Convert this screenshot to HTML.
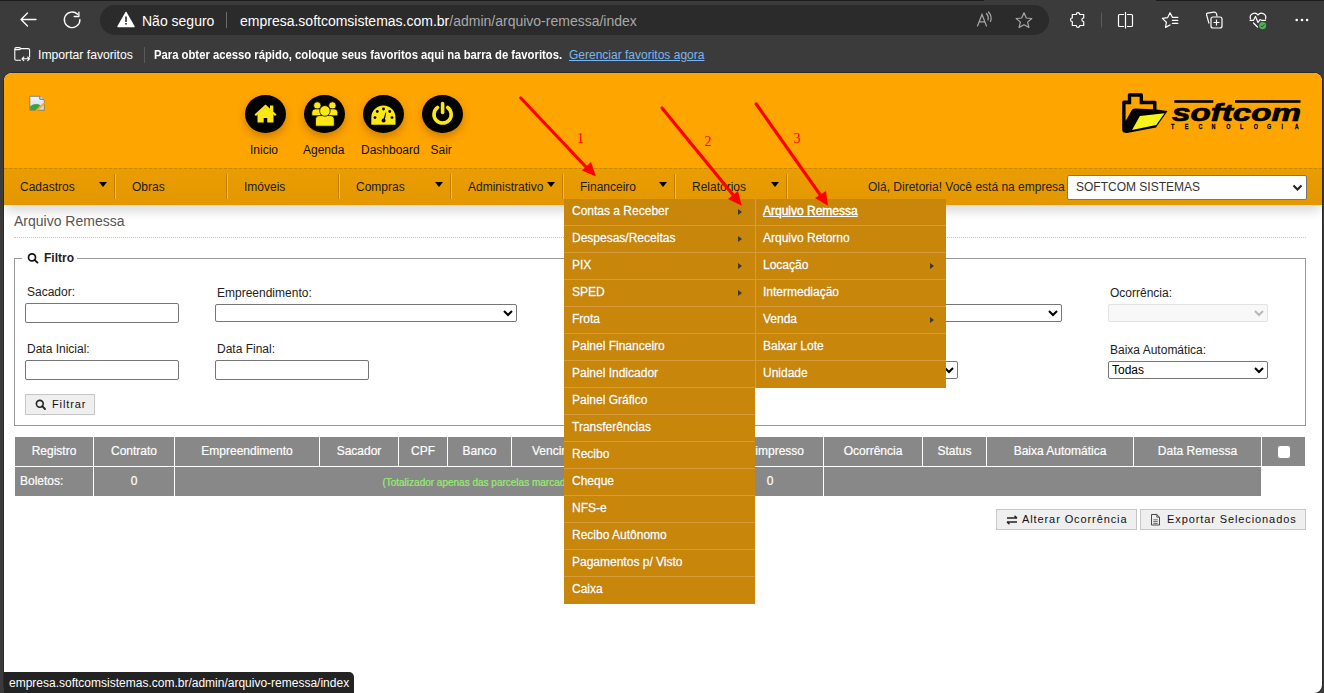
<!DOCTYPE html>
<html><head><meta charset="utf-8">
<style>
*{margin:0;padding:0;box-sizing:border-box}
html,body{width:1324px;height:693px;overflow:hidden;background:#3b3b3b;font-family:"Liberation Sans",sans-serif;font-size:12px;position:relative}
.a{position:absolute}
.t{position:absolute;white-space:nowrap;line-height:1}
#topstrip{left:0;top:0;width:1324px;height:1px;background:#1c1c1c}
#addr{left:100px;top:5px;width:949px;height:30px;border-radius:15px;background:#2b2b2b}
#page{left:4px;top:73px;width:1318px;height:620px;background:#fff;border-radius:8px;overflow:hidden;box-shadow:0 0 0 1px #2a2a2a}
#hdr{left:4px;top:73px;width:1318px;height:96px;background:#ffa500;border-radius:8px 8px 0 0}
#nav{left:4px;top:168px;width:1318px;height:37px;background:linear-gradient(#e89d00,#e49700);border-top:1px dashed #c98600}
.ni{position:absolute;top:0;height:36px;width:112px}
.ni:after{content:"";position:absolute;right:0;top:5px;height:25px;width:2px;background:linear-gradient(90deg,#c47f00 50%,#f8bb45 50%)}
.ni span{position:absolute;left:16px;top:12px;color:#1a1a1a;font-size:12px;white-space:nowrap;line-height:1}
.tri{position:absolute;top:13px;width:0;height:0;border-left:4.7px solid transparent;border-right:4.7px solid transparent;border-top:5px solid #000}
.circ{position:absolute;width:41px;height:38px;border-radius:50%;background:#000;box-shadow:0 4px 8px rgba(110,55,0,.35)}
.lbl{position:absolute;top:144px;color:#111;font-size:12px;line-height:1;white-space:nowrap}
.flab{position:absolute;color:#222;font-size:12px;line-height:1;white-space:nowrap}
.inp{position:absolute;height:20px;border:1px solid #767676;border-radius:2px;background:#fff}
.sel{position:absolute;height:18px;border:1px solid #767676;border-radius:2px;background:#fff}
.chev{position:absolute;right:3px;top:5px;width:10px;height:7px}
.btn{position:absolute;height:21px;border:1px solid #c7c7c7;background:#efefef;color:#111;font-size:11px;line-height:1;letter-spacing:.9px;white-space:nowrap}
#tbl{left:15px;top:437px;width:1290px;height:59px}
.th{position:absolute;top:437px;height:29px;background:#888;color:#fff;font-size:12px;-webkit-text-stroke:0.2px #fff;line-height:29px;text-align:center;white-space:nowrap;overflow:hidden}
.td{position:absolute;top:467px;height:29px;background:#888;color:#fff;font-size:12px;-webkit-text-stroke:0.2px currentColor;line-height:29px;white-space:nowrap;overflow:hidden}
.menu{position:absolute;background:#c8860a}
.mi{position:absolute;left:0;width:100%;height:27px;border-bottom:1px solid #d89b3c;color:#fff;font-size:12px;line-height:1;white-space:nowrap;text-shadow:0 0 1px rgba(80,40,0,.45);-webkit-text-stroke:0.3px #fff}
.mi span{position:absolute;left:8px;top:6px}
.mi i{position:absolute;left:174px;top:10px;width:0;height:0;border-top:3.8px solid transparent;border-bottom:3.8px solid transparent;border-left:4.5px solid #3a3a3a}
</style></head><body>
<div class="a" id="topstrip"></div>
<div class="a" style="left:984px;top:0;width:172px;height:1px;background:#3b3b3b"></div>
<div class="a" id="addr"></div>

<!-- chrome icons -->
<svg class="a" style="left:0;top:0" width="1324" height="72" viewBox="0 0 1324 72">
  <g fill="none" stroke="#fff" stroke-width="1.3" stroke-linecap="round" stroke-linejoin="round">
    <path d="M21 19.5H36M21 19.5L27.5 13M21 19.5L27.5 26"/>
    <path d="M79.9 19.5A7.8 7.8 0 1 1 77.6 14.3"/>
    <path d="M78.9 12.2V16.5H74.2"/>
  </g>
  <path d="M126 12.5L134 26.5H118Z" fill="#fff" stroke="#fff" stroke-width="1.5" stroke-linejoin="round"/>
  <rect x="125.2" y="16.5" width="1.6" height="5.5" fill="#292929"/>
  <rect x="125.2" y="23" width="1.6" height="1.6" fill="#292929"/>
  <line x1="226.5" y1="12" x2="226.5" y2="28" stroke="#6a6a6a" stroke-width="1"/>
  <!-- read aloud -->
  <g fill="none" stroke="#a8a8a8" stroke-width="1.2" stroke-linecap="round">
    <path d="M977.5 26L982 14.5L986.5 26M979.3 21.8H984.7"/>
    <path d="M986.5 13.5Q989 16.5 988 20"/>
    <path d="M988.5 12Q992.5 16.5 990.5 21.5"/>
  </g>
  <!-- star -->
  <path d="M1024 12.8L1026.3 18L1031.8 18.5L1027.6 22.1L1028.9 27.5L1024 24.7L1019.1 27.5L1020.4 22.1L1016.2 18.5L1021.7 18Z" fill="none" stroke="#a8a8a8" stroke-width="1.2" stroke-linejoin="round"/>
  <!-- puzzle -->
  <path d="M1072.3 14.5H1076.2A1.8 1.8 0 0 1 1079.8 14.5H1083.7V18A1.8 1.8 0 0 0 1083.7 21.6V25.5H1079.8A1.8 1.8 0 0 1 1076.2 25.5H1072.3V21.6A1.8 1.8 0 0 1 1072.3 18Z" fill="none" stroke="#fff" stroke-width="1.2" stroke-linejoin="round"/>
  <line x1="1101.5" y1="12.5" x2="1101.5" y2="27.5" stroke="#5a5a5a" stroke-width="1"/>
  <!-- split -->
  <g fill="none" stroke="#fff" stroke-width="1.2">
    <path d="M1124 14.5H1119.5Q1118.5 14.5 1118.5 15.5V25.5Q1118.5 26.5 1119.5 26.5H1124"/>
    <path d="M1127 14.5H1131.5Q1132.5 14.5 1132.5 15.5V25.5Q1132.5 26.5 1131.5 26.5H1127"/>
    <path d="M1125.5 12V28.5"/>
  </g>
  <!-- favorites -->
  <g fill="none" stroke="#fff" stroke-width="1.2" stroke-linejoin="round" stroke-linecap="round">
    <path d="M1170 25L1165.5 27.4L1166.4 22.2L1162.3 18.4L1167.7 17.6L1170 12.7L1172.5 17.4H1177.8"/>
    <path d="M1172.4 20.3H1177.8M1172.4 23.4H1177.8"/>
  </g>
  <!-- collections -->
  <g fill="none" stroke="#fff" stroke-width="1.2" stroke-linejoin="round">
    <path d="M1209 23.5L1206.5 14.5Q1206.3 13.4 1207.4 13.1L1214 12.2Q1215.5 12 1216.5 13.5L1217 16.5"/>
    <rect x="1211" y="17" width="11" height="11" rx="2"/>
    <path d="M1216.5 19.5V25.5M1213.5 22.5H1219.5"/>
  </g>
  <!-- health -->
  <g fill="none" stroke="#fff" stroke-width="1.2" stroke-linejoin="round" stroke-linecap="round">
    <path d="M1250.5 19A4.3 4.3 0 0 1 1258 15A4.3 4.3 0 0 1 1265.5 19"/>
    <path d="M1250 20.3H1253.5L1255.5 16.5L1258 22.5L1260 19.5L1261.5 20.3H1265.5"/>
    <path d="M1253.5 23L1257.5 27"/>
  </g>
  <circle cx="1262.6" cy="25.6" r="3.6" fill="#4caf50"/>
  <path d="M1260.8 25.8L1262 27L1264.5 24.3" fill="none" stroke="#1b5e20" stroke-width="1"/>
  <circle cx="1296.7" cy="20" r="1.3" fill="#fff"/>
  <circle cx="1302" cy="20" r="1.3" fill="#fff"/>
  <circle cx="1307.1" cy="20" r="1.3" fill="#fff"/>
  <!-- bookmarks folder icon -->
  <g fill="none" stroke="#fff" stroke-width="1.1" stroke-linejoin="round" stroke-linecap="round">
    <path d="M20.5 60.2H16Q14.8 60.2 14.8 59V49Q14.8 47.6 16.2 47.6H19.3Q20.5 47.6 20.5 48.6Q20.5 49.6 19.3 49.6H15.5M20.5 48.6H28Q29.6 48.6 29.6 50.2V57"/>
    <path d="M22 58.8H29.5M22 58.8L23.8 57M22 58.8L23.8 60.6M29.5 58.8L27.7 57M29.5 58.8L27.7 60.6"/>
  </g>
  <line x1="144.5" y1="47" x2="144.5" y2="63" stroke="#5a5a5a" stroke-width="1"/>
</svg>
<div class="t" style="left:142px;top:13.5px;font-size:14px;color:#fff">Não seguro</div>
<div class="t" style="left:240px;top:13.5px;font-size:14px;color:#fff">empresa.softcomsistemas.com.br<span style="color:#a9a9a9">/admin/arquivo-remessa/index</span></div>
<div class="t" style="left:38px;top:49px;font-size:12.2px;color:#fff">Importar favoritos</div>
<div class="t" style="left:154px;top:49px;font-size:12px;font-weight:bold;color:#fff;transform:scaleX(0.94);transform-origin:0 0">Para obter acesso rápido, coloque seus favoritos aqui na barra de favoritos.</div>
<div class="t" style="left:569px;top:49px;font-size:12px;color:#7ab7f0;text-decoration:underline">Gerenciar favoritos agora</div>

<div class="a" id="page"></div>
<div class="a" id="hdr"></div>

<!-- broken image icon -->
<svg class="a" style="left:26px;top:92px" width="22" height="22" viewBox="26 92 22 22">
  <defs><linearGradient id="bi" x1="0" y1="0" x2="0" y2="1"><stop offset="0" stop-color="#f4f6ff"/><stop offset="1" stop-color="#c9d3f0"/></linearGradient></defs>
  <path d="M29.8 96.3H39.8L44.3 100.3V110.3H29.8Z" fill="url(#bi)" stroke="#8a7a5a" stroke-width="0.9"/>
  <path d="M30.2 110V106.3Q35 102.5 40.5 105.2L36.5 110Z" fill="#3da23a"/>
  <path d="M36 110.8L44.8 102.8" stroke="#ffa500" stroke-width="1.6"/>
  <path d="M39.8 96.3V99.3H43.8" fill="#e8e8ff" stroke="#555" stroke-width="0.8"/>
</svg>

<!-- header icons -->
<div class="circ" style="left:245px;top:95px"></div>
<div class="circ" style="left:304px;top:95px"></div>
<div class="circ" style="left:363px;top:95px"></div>
<div class="circ" style="left:422px;top:95px"></div>
<svg class="a" style="left:0;top:80px" width="500" height="60" viewBox="0 80 500 60">
  <!-- house -->
  <g fill="#fbe814">
    <path d="M254.5 114.5L265.5 104.5L276.5 114.5L275 116L265.5 107.5L256 116Z"/>
    <rect x="270" y="105.5" width="3.3" height="6"/>
    <path d="M257.5 114L265.5 107.2L273.5 114V122.6H267.3V118H263.7V122.6H257.5Z"/>
  </g>
  <!-- agenda people -->
  <g fill="#fbe814" stroke="#000" stroke-width="0.7">
    <circle cx="317.3" cy="105.5" r="3.7"/>
    <circle cx="332.4" cy="105.5" r="3.7"/>
    <path d="M311.8 115.8V112.5Q311.8 108.9 315.4 108.9H319.5Q321 108.9 321 110.4V115.8Z"/>
    <path d="M337.8 115.8V112.5Q337.8 108.9 334.2 108.9H330.1Q328.6 108.9 328.6 110.4V115.8Z"/>
    <path d="M315.5 125V120Q315.5 115.6 319.9 115.6H329.9Q334.3 115.6 334.3 120V125Q334.3 126.2 333.1 126.2H316.7Q315.5 126.2 315.5 125Z"/>
    <circle cx="324.9" cy="110.9" r="5.3"/>
  </g>
  <!-- dashboard gauge -->
  <path d="M371.3 124.8V117.5A12.1 12.1 0 0 1 395.5 117.5V124.8Z" fill="#fbe814"/>
  <g fill="#000">
    <circle cx="383.5" cy="109" r="1.4"/>
    <circle cx="377.3" cy="111.5" r="1.4"/>
    <circle cx="389.7" cy="111.5" r="1.4"/>
    <circle cx="375" cy="117.6" r="1.4"/>
    <circle cx="392" cy="117.6" r="1.4"/>
    <circle cx="383.6" cy="120.5" r="2"/>
    <path d="M383 120.5L385.5 112.5L386.3 112.7L384.5 121Z"/>
  </g>
  <!-- power -->
  <g fill="none" stroke="#fbe814" stroke-width="3.6" stroke-linecap="round">
    <path d="M437.5 107.5A8.6 8.6 0 1 0 447.7 107.5"/>
    <path d="M442.6 103.5V112.5"/>
  </g>
</svg>
<div class="lbl" style="left:250px">Inicio</div>
<div class="lbl" style="left:303px">Agenda</div>
<div class="lbl" style="left:361px">Dashboard</div>
<div class="lbl" style="left:430.5px">Sair</div>

<!-- logo -->
<svg class="a" style="left:1118px;top:88px" width="190" height="48" viewBox="1118 88 190 48">
  <path d="M1122.2 102Q1122.2 100.5 1123.7 100.5H1127.8V94.8Q1127.8 93.3 1129.3 93.3H1141.5Q1143 93.3 1143 94.8V100.8H1155Q1156.5 100.8 1156.5 102.3V109.5L1167.5 111L1156 127.5L1127 133Q1122.2 133 1122.2 130Z" fill="#000"/>
  <path d="M1125.6 104.3H1131.2V96.8H1139.6V104.3H1153V109.3L1135 108.6Q1132.5 108.8 1131.5 110.5L1125.6 121Z" fill="#ffa500"/>
  <path d="M1139.9 116L1164.5 113.3L1156.2 125L1132 129.9Z" fill="#f8f31a"/>
  <rect x="1174.3" y="100.2" width="39" height="2.6" fill="#000"/>
  <rect x="1235" y="100.2" width="65.5" height="2.6" fill="#000"/>
  <text x="1172" y="120.5" font-family="Liberation Sans" font-weight="bold" font-style="italic" font-size="23" fill="#000" stroke="#000" stroke-width="0.7" textLength="129" lengthAdjust="spacingAndGlyphs">softcom</text>
  <g font-family="Liberation Sans" font-weight="bold" font-size="7.2" fill="#000" stroke="#000" stroke-width="0.25">
    <text transform="translate(1171 129.2) scale(0.75 1)">T</text>
    <text transform="translate(1184.7 129.2) scale(0.75 1)">E</text>
    <text transform="translate(1198.4 129.2) scale(0.75 1)">C</text>
    <text transform="translate(1211.5 129.2) scale(0.75 1)">N</text>
    <text transform="translate(1226.3 129.2) scale(0.75 1)">O</text>
    <text transform="translate(1240 129.2) scale(0.75 1)">L</text>
    <text transform="translate(1253.7 129.2) scale(0.75 1)">O</text>
    <text transform="translate(1266.9 129.2) scale(0.75 1)">G</text>
    <text transform="translate(1281.6 129.2) scale(0.75 1)">I</text>
    <text transform="translate(1294.8 129.2) scale(0.75 1)">A</text>
  </g>
</svg>

<!-- nav -->
<div class="a" style="left:4px;top:192px;width:1318px;height:13px;box-shadow:0 7px 12px -2px rgba(0,0,0,.2)"></div>

<div class="a" id="nav">
  <div class="ni" style="left:0"><span>Cadastros</span><i class="tri" style="left:95px"></i></div>
  <div class="ni" style="left:112px"><span>Obras</span></div>
  <div class="ni" style="left:224px"><span>Imóveis</span></div>
  <div class="ni" style="left:336px"><span>Compras</span><i class="tri" style="left:95px"></i></div>
  <div class="ni" style="left:448px"><span>Administrativo</span><i class="tri" style="left:95px"></i></div>
  <div class="ni" style="left:560px"><span>Financeiro</span><i class="tri" style="left:95px"></i></div>
  <div class="ni" style="left:672px"><span>Relatórios</span><i class="tri" style="left:95px"></i></div>
  <div class="t" style="left:864px;top:12px;color:#222">Olá, Diretoria! Você está na empresa</div>
  <div class="a" style="left:1063px;top:6px;width:240px;height:25px;background:#fff;border:1px solid #767676;border-radius:2px">
    <div class="t" style="left:8px;top:5px;font-size:12px;color:#333">SOFTCOM SISTEMAS</div>
    <svg class="a" style="right:3px;top:8px" width="11" height="8" viewBox="0 0 11 8"><path d="M1.5 1.5L5.5 5.5L9.5 1.5" fill="none" stroke="#222" stroke-width="2.1"/></svg>
  </div>
</div>

<!-- page content -->
<div class="t" style="left:14px;top:214px;font-size:14px;color:#555">Arquivo Remessa</div>
<div class="a" style="left:14px;top:237px;width:1292px;height:1px;border-top:1px dotted #c8c8c8"></div>

<div class="a" style="left:14px;top:258px;width:1292px;height:168px;border:1px solid #9a9a9a"></div>
<div class="a" style="left:22px;top:250px;width:55px;height:16px;background:#fff"></div>
<svg class="a" style="left:27px;top:252px" width="12" height="12" viewBox="0 0 12 12"><circle cx="5" cy="5.4" r="3.5" fill="none" stroke="#111" stroke-width="1.7"/><path d="M7.5 7.9L10.5 10.6" stroke="#111" stroke-width="1.9" stroke-linecap="round"/></svg>
<div class="t" style="left:44px;top:252px;font-weight:bold;color:#222">Filtro</div>

<div class="flab" style="left:27px;top:286px">Sacador:</div>
<div class="inp" style="left:25px;top:303px;width:154px"></div>
<div class="flab" style="left:217px;top:287px">Empreendimento:</div>
<div class="sel" style="left:215px;top:304px;width:302px"><svg class="chev" viewBox="0 0 10 7"><path d="M1 1L5 5L9 1" fill="none" stroke="#000" stroke-width="2"/></svg></div>
<div class="sel" style="left:900px;top:304px;width:162px"><svg class="chev" viewBox="0 0 10 7"><path d="M1 1L5 5L9 1" fill="none" stroke="#000" stroke-width="2"/></svg></div>
<div class="flab" style="left:1110px;top:287px">Ocorrência:</div>
<div class="sel" style="left:1108px;top:304px;width:160px;border-color:#e2e2e2;background:#f8f8f8"><svg class="chev" viewBox="0 0 10 7"><path d="M1 1L5 5L9 1" fill="none" stroke="#b8b8b8" stroke-width="2"/></svg></div>

<div class="flab" style="left:27px;top:343px">Data Inicial:</div>
<div class="inp" style="left:25px;top:360px;width:154px"></div>
<div class="flab" style="left:217px;top:343px">Data Final:</div>
<div class="inp" style="left:215px;top:360px;width:154px"></div>
<div class="sel" style="left:800px;top:361px;width:158px"><svg class="chev" viewBox="0 0 10 7"><path d="M1 1L5 5L9 1" fill="none" stroke="#000" stroke-width="2"/></svg></div>
<div class="flab" style="left:1110px;top:344px">Baixa Automática:</div>
<div class="sel" style="left:1108px;top:361px;width:160px"><div class="t" style="left:3px;top:2px;color:#000">Todas</div><svg class="chev" viewBox="0 0 10 7"><path d="M1 1L5 5L9 1" fill="none" stroke="#000" stroke-width="2"/></svg></div>

<div class="btn" style="left:25px;top:394px;width:70px"><svg class="a" style="left:9px;top:4px" width="12" height="12" viewBox="0 0 12 12"><circle cx="4.8" cy="4.8" r="3.4" fill="none" stroke="#222" stroke-width="1.6"/><path d="M7.2 7.2L10 10" stroke="#222" stroke-width="1.9" stroke-linecap="round"/></svg><span class="t" style="left:26px;top:4px">Filtrar</span></div>

<!-- table -->
<div class="th" style="left:15px;width:78px">Registro</div>
<div class="th" style="left:94px;width:80px">Contrato</div>
<div class="th" style="left:175px;width:144px">Empreendimento</div>
<div class="th" style="left:320px;width:78px">Sacador</div>
<div class="th" style="left:399px;width:48px">CPF</div>
<div class="th" style="left:448px;width:63px">Banco</div>
<div class="th" style="left:512px;width:311px;text-align:left"><span class="a" style="left:20px;top:0">Vencimento</span><span class="a" style="left:243.3px;top:0">impresso</span></div>
<div class="th" style="left:824px;width:98px">Ocorrência</div>
<div class="th" style="left:923px;width:63px">Status</div>
<div class="th" style="left:987px;width:146px">Baixa Automática</div>
<div class="th" style="left:1134px;width:127px">Data Remessa</div>
<div class="th" style="left:1262px;width:43px"><span class="a" style="left:16px;top:9px;width:12px;height:12px;background:#fff;border-radius:2px"></span></div>
<div class="td" style="left:15px;width:78px;padding-left:5px">Boletos:</div>
<div class="td" style="left:94px;width:80px;text-align:center">0</div>
<div class="td" style="left:175px;width:648px;color:#95ef6e;font-size:10px"><span class="a" style="left:207.4px;top:1px">(Totalizador apenas das parcelas marcadas)</span></div>
<div class="td" style="left:750px;width:40px;text-align:center;background:transparent">0</div>
<div class="td" style="left:824px;width:437px"></div>

<div class="btn" style="left:996px;top:509px;width:141px"><svg class="a" style="left:9px;top:5px" width="12" height="10" viewBox="0 0 12 10"><path d="M1 3H11M8.5 0.8L11 3M1 7H11M3.5 9.2L1 7" fill="none" stroke="#222" stroke-width="1.4"/></svg><span class="t" style="left:25px;top:4px">Alterar Ocorrência</span></div>
<div class="btn" style="left:1140px;top:509px;width:166px"><svg class="a" style="left:9px;top:3px" width="11" height="13" viewBox="0 0 11 13"><path d="M1.5 1.5H6.8L9.5 4.2V12H1.5Z" fill="none" stroke="#333" stroke-width="0.9"/><path d="M6.8 1.5V4.2H9.5" fill="none" stroke="#333" stroke-width="0.8"/><path d="M3.3 6.8H7.7M3.3 8.6H7.7M3.3 10.4H7.7" stroke="#333" stroke-width="0.7"/></svg><span class="t" style="left:26px;top:4px">Exportar Selecionados</span></div>

<!-- menus -->
<div class="menu" style="left:564px;top:199px;width:191px;height:405px">
  <div class="mi" style="top:0"><span>Contas a Receber</span><i></i></div>
  <div class="mi" style="top:27px"><span>Despesas/Receitas</span><i></i></div>
  <div class="mi" style="top:54px"><span>PIX</span><i></i></div>
  <div class="mi" style="top:81px"><span>SPED</span><i></i></div>
  <div class="mi" style="top:108px"><span>Frota</span></div>
  <div class="mi" style="top:135px"><span>Painel Financeiro</span></div>
  <div class="mi" style="top:162px"><span>Painel Indicador</span></div>
  <div class="mi" style="top:189px"><span>Painel Gráfico</span></div>
  <div class="mi" style="top:216px"><span>Transferências</span></div>
  <div class="mi" style="top:243px"><span>Recibo</span></div>
  <div class="mi" style="top:270px"><span>Cheque</span></div>
  <div class="mi" style="top:297px"><span>NFS-e</span></div>
  <div class="mi" style="top:324px"><span>Recibo Autônomo</span></div>
  <div class="mi" style="top:351px"><span>Pagamentos p/ Visto</span></div>
  <div class="mi" style="top:378px;border-bottom:none"><span>Caixa</span></div>
</div>
<div class="menu" style="left:755px;top:199px;width:191px;height:189px;border-left:1px solid #d89b3c">
  <div class="mi" style="top:0"><span style="left:7px;text-decoration:underline">Arquivo Remessa</span></div>
  <div class="mi" style="top:27px"><span style="left:7px">Arquivo Retorno</span></div>
  <div class="mi" style="top:54px"><span style="left:7px">Locação</span><i></i></div>
  <div class="mi" style="top:81px"><span style="left:7px">Intermediação</span></div>
  <div class="mi" style="top:108px"><span style="left:7px">Venda</span><i></i></div>
  <div class="mi" style="top:135px"><span style="left:7px">Baixar Lote</span></div>
  <div class="mi" style="top:162px;border-bottom:none"><span style="left:7px">Unidade</span></div>
</div>

<!-- red arrows -->
<svg class="a" style="left:0;top:0" width="1324" height="693" viewBox="0 0 1324 693">
  <g stroke="#f00" stroke-width="3.2" stroke-linecap="round" fill="#f00">
    <path d="M520.8 98L587 168"/>
    <path d="M662 108L734 196"/>
    <path d="M756.2 104L821 196"/>
  </g>
  <g fill="#f00">
    <path d="M596 176.6L582 170.5L591 162Z"/>
    <path d="M741.7 205.7L728 199L738 191Z"/>
    <path d="M828 205.7L815 198L826 191Z"/>
  </g>
  <g font-family="Liberation Serif" font-size="14" fill="#f00">
    <text x="577" y="143">1</text>
    <text x="704.5" y="146">2</text>
    <text x="793.5" y="142.7">3</text>
  </g>
</svg>

<!-- status bar -->
<div class="a" style="left:4px;top:672px;width:350px;height:21px;background:#232323;border-radius:0 5px 0 0"></div>
<div class="t" style="left:9px;top:677px;font-size:12px;color:#fff">empresa.softcomsistemas.com.br/admin/arquivo-remessa/index</div>
</body></html>
